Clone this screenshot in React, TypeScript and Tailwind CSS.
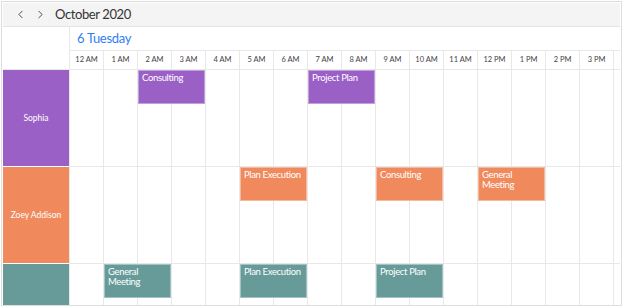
import { ChevronLeft, ChevronRight } from "lucide-react"

const hours = ["12 AM", "1 AM", "2 AM", "3 AM", "4 AM", "5 AM", "6 AM", "7 AM", "8 AM", "9 AM", "10 AM", "11 AM", "12 PM", "1 PM", "2 PM", "3 PM", ""]

type Ev = { title: string; start: number; span: number }

const resources: { name: string; bg: string; events: Ev[] }[] = [
  {
    name: "Sophia",
    bg: "bg-[#9b60c6]",
    events: [
      { title: "Consulting", start: 2, span: 2 },
      { title: "Project Plan", start: 7, span: 2 },
    ],
  },
  {
    name: "Zoey Addison",
    bg: "bg-[#f08a5d]",
    events: [
      { title: "Plan Execution", start: 5, span: 2 },
      { title: "Consulting", start: 9, span: 2 },
      { title: "General\nMeeting", start: 12, span: 2 },
    ],
  },
  {
    name: "",
    bg: "bg-[#679b99]",
    events: [
      { title: "General\nMeeting", start: 1, span: 2 },
      { title: "Plan Execution", start: 5, span: 2 },
      { title: "Project Plan", start: 9, span: 2 },
    ],
  },
]

const COL = 34

function Row({ r }: { r: (typeof resources)[number] }) {
  return (
    <div className="relative flex h-[97px] shrink-0 border-b border-[#e8e8e8]">
      {hours.map((h, i) => (
        <div key={i} className="w-[34px] shrink-0 border-r border-[#e8e8e8]" />
      ))}
      {r.events.map((e) => (
        <div
          key={e.title + e.start}
          className={`absolute top-0 h-[34px] ${r.bg} whitespace-pre border border-white/40 pl-[3px] pt-[2px] text-[9.5px] leading-[10px] tracking-[-0.35px] text-white`}
          style={{ left: e.start * COL, width: e.span * COL - 1 }}
        >
          {e.title}
        </div>
      ))}
    </div>
  )
}

export default function App() {
  return (
    <div
      className="h-[306px] w-[624px] overflow-hidden bg-white pl-[1px] pt-[1px]"
      style={{ fontFamily: 'Lato, "Open Sans", sans-serif' }}
    >
      <div className="h-[305px] w-[621px] overflow-hidden border border-[#dddddd] p-[1px]">
        <div className="flex h-[24px] items-center border-b border-[#e4e4e4] bg-[#f4f4f4] pl-[11px] text-[#333]">
          <ChevronLeft size={13} strokeWidth={1.6} />
          <ChevronRight size={13} strokeWidth={1.6} className="ml-[7px]" />
          <span className="ml-[8px] text-[13px] leading-none tracking-[-0.4px]">October 2020</span>
        </div>
        <div className="flex">
          <div className="w-[67px] shrink-0 border-r border-[#e8e8e8]">
            <div className="h-[43px] border-b border-[#e8e8e8]" />
            {resources.map((r, i) => (
              <div key={i} className="h-[97px] border-b border-white">
                <div
                  className={`flex h-full items-center justify-center whitespace-nowrap ${r.bg} text-[8.5px] text-white`}
                >
                  {r.name}
                </div>
              </div>
            ))}
          </div>
          <div className="flex-1 overflow-hidden">
            <div className="flex h-[23px] items-center pl-[7px] text-[13px] tracking-[-0.3px] text-[#2f7ef5]">
              6 Tuesday
            </div>
            <div className="flex h-[20px] border-b border-[#e8e8e8]">
              {hours.map((h, i) => (
                <div
                  key={i}
                  className="flex w-[34px] shrink-0 items-center justify-center whitespace-nowrap border-r border-t border-[#e8e8e8] text-[7.5px] text-[#444]"
                >
                  {h}
                </div>
              ))}
            </div>
            {resources.map((r, i) => (
              <Row key={i} r={r} />
            ))}
          </div>
        </div>
      </div>
    </div>
  )
}
